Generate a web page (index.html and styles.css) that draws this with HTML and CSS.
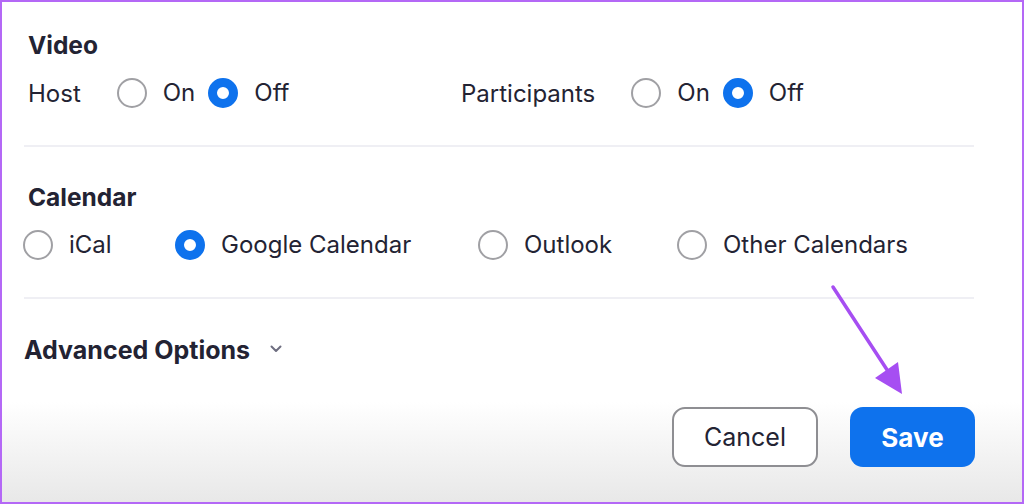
FILE: index.html
```html
<!DOCTYPE html>
<html lang="en">

<head>
    <meta charset="UTF-8">
    <meta name="viewport" content="width=device-width, initial-scale=1.0">
    <title>Meeting Settings</title>
    <link rel="stylesheet" href="styles.css">
</head>

<body>
    <div class="panel">

        <!-- Video -->
        <section class="group">
            <h2 class="group__title">Video</h2>
            <div class="video-row">
                <div class="field">
                    <span class="field__label">Host</span>
                    <label class="option"><span class="radio"></span>On</label>
                    <label class="option"><span class="radio radio--on"></span>Off</label>
                </div>
                <div class="field">
                    <span class="field__label">Participants</span>
                    <label class="option"><span class="radio"></span>On</label>
                    <label class="option"><span class="radio radio--on"></span>Off</label>
                </div>
            </div>
        </section>

        <hr class="divider">

        <!-- Calendar -->
        <section class="group">
            <h2 class="group__title">Calendar</h2>
            <div class="calendar-row">
                <label class="option"><span class="radio"></span>iCal</label>
                <label class="option"><span class="radio radio--on"></span>Google Calendar</label>
                <label class="option"><span class="radio"></span>Outlook</label>
                <label class="option"><span class="radio"></span>Other Calendars</label>
            </div>
        </section>

        <hr class="divider">

        <div class="advanced">
            Advanced Options
            <svg class="advanced__chevron" width="12" height="8" viewBox="0 0 12 8">
                <path d="M1.5 1.5 L6 6 L10.5 1.5" fill="none" stroke="#6e6e80" stroke-width="2" stroke-linecap="round" stroke-linejoin="round"/>
            </svg>
        </div>

        <div class="actions">
            <button class="btn btn--cancel">Cancel</button>
            <button class="btn btn--save">Save</button>
        </div>

        <!-- flecha de anotacion -->
        <svg class="arrow" width="90" height="120" viewBox="0 0 90 120">
            <line x1="4" y1="3" x2="66" y2="98" stroke="#a64ef2" stroke-width="3.5" stroke-linecap="round"/>
            <path d="M46 94 L73 110 L69 78 Z" fill="#a64ef2"/>
        </svg>
    </div>
</body>

</html>
```

FILE: styles.css
```css
* {
    padding: 0;
    margin: 0;
    box-sizing: border-box;
}

body {
    font-family: Inter, "Liberation Sans", sans-serif;
    color: #232333;
}

/* Panel */
.panel {
    position: relative;
    width: 1024px;
    height: 504px;
    padding: 28px 48px 0 22px;
    border: 2px solid #b468f6;
    background: linear-gradient(to bottom, #ffffff 0%, #ffffff 80%, #e8e8e8 100%);
}

/* Grupos */
.group__title {
    font-size: 24.5px;
    font-weight: 700;
    line-height: 30px;
    margin-left: 4px;
}

.video-row {
    display: flex;
    margin-top: 18px;
    margin-left: 4px;
}

.field {
    display: flex;
    align-items: center;
    width: 433px;
}

.field__label {
    font-size: 24px;
    margin-right: 36px;
}

.option {
    display: flex;
    align-items: center;
    gap: 16px;
    font-size: 24px;
    line-height: 30px;
    margin-right: 13px;
}

.radio {
    width: 30px;
    height: 30px;
    border-radius: 50%;
    border: 2px solid #a0a0a4;
    background-color: #fff;
}

.radio--on {
    border: 9px solid #0e72ed;
}

.calendar-row {
    display: grid;
    grid-template-columns: 152px 303px 199px auto;
    margin-top: 18px;
    margin-left: -1px;
}

.divider {
    border: none;
    border-top: 2px solid #efeff4;
    margin-top: 37px;
    margin-bottom: 35px;
}

/* Avanzado */
.advanced {
    display: flex;
    align-items: center;
    gap: 20px;
    font-size: 25px;
    font-weight: 700;
    line-height: 30px;
    margin-top: 36px;
}

.advanced__chevron {
    margin-top: -2px;
}

/* Botones */
.actions {
    display: flex;
    justify-content: flex-end;
    gap: 32px;
    margin-top: 42px;
    margin-right: -1px;
}

.btn {
    height: 60px;
    border-radius: 13px;
    font-family: Inter, "Liberation Sans", sans-serif;
    font-size: 25px;
}

.btn--cancel {
    width: 146px;
    border: 2px solid #8e8e92;
    background-color: #fff;
    color: #232333;
}

.btn--save {
    width: 125px;
    border: none;
    background-color: #0e72ed;
    color: #fff;
    font-size: 26px;
    font-weight: 700;
}

.arrow {
    position: absolute;
    left: 827px;
    top: 282px;
}
```
